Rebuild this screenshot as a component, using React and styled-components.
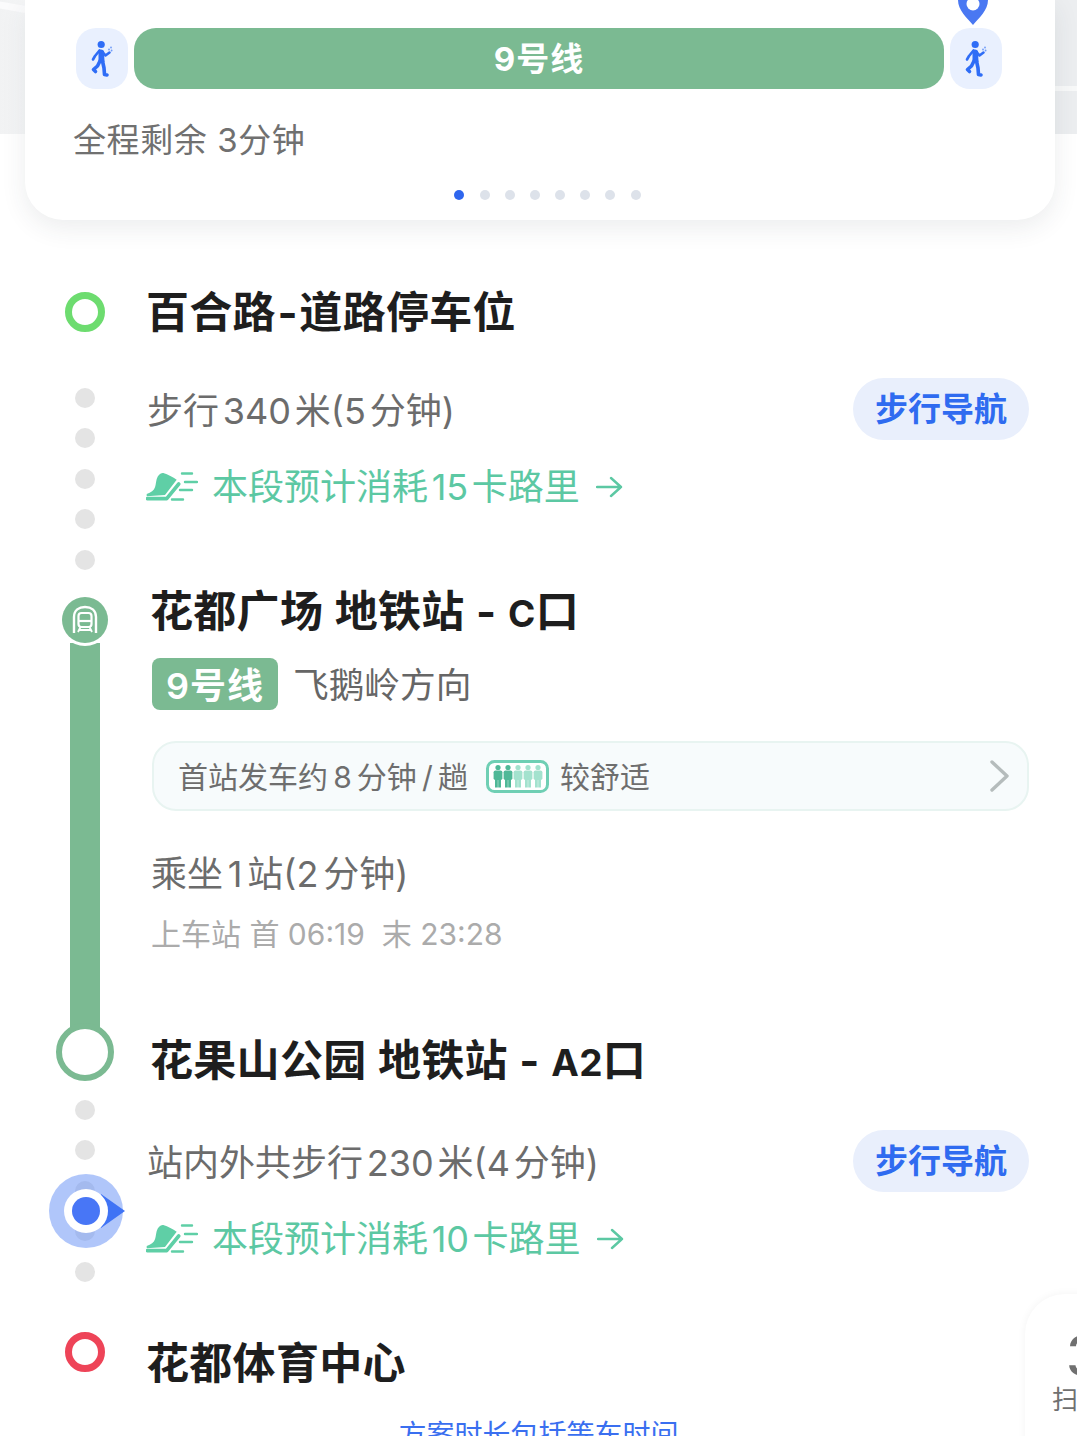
import styled, { createGlobalStyle } from "styled-components";

const GlobalStyle = createGlobalStyle`
	html, body {
		margin: 0;
		padding: 0;
		background: #fff;
		overflow: hidden;
	}
	* {
		box-sizing: border-box;
	}
`;

const Page = styled.div`
	position: relative;
	width: 1077px;
	height: 1436px;
	overflow: hidden;
	background: #fff;
	font-family: Inter, "Noto Sans CJK SC", sans-serif;
	color: #666;
`;

const MapBackdrop = styled.div`
	position: absolute;
	left: 0;
	top: 0;
	width: 100%;
	height: 134px;
	background: linear-gradient(90deg, #f1f2f3 0, #f5f6f7 24px, #eceef0 1056px);
`;

const RoadLeft = styled.div`
	position: absolute;
	left: -10px;
	top: 5px;
	width: 60px;
	height: 7px;
	background: #fbfbfc;
	transform: rotate(10deg);
`;

const RoadRight = styled.div`
	position: absolute;
	right: 0;
	top: 86px;
	width: 24px;
	height: 5px;
	background: #f8f9f9;
`;

const Card = styled.section`
	position: relative;
	width: 1030px;
	height: 220px;
	margin-left: 25px;
	padding: 28px 53px 0 51px;
	background: #fff;
	border-radius: 0 0 38px 38px;
	box-shadow: 0 8px 26px rgba(40, 50, 70, 0.09);
`;

const RouteRow = styled.div`
	display: flex;
	gap: 6px;
	height: 61px;
`;

const WalkTile = styled.div`
	position: relative;
	flex: 0 0 52px;
	display: flex;
	align-items: center;
	justify-content: center;
	background: #e9f0fe;
	border-radius: 20px;
`;

const PinMark = styled.svg`
	position: absolute;
	left: 7px;
	top: -28px;
	width: 32px;
	height: 26px;
`;

const LineBar = styled.div`
	flex: 1;
	display: flex;
	align-items: center;
	justify-content: center;
	padding-bottom: 3px;
	background: #7bba92;
	border-radius: 22px;
	color: #fff;
	font-size: 33px;
	font-weight: 700;
	letter-spacing: 1px;
`;

const Remaining = styled.div`
	margin: 28px 0 0 -3px;
	height: 46px;
	line-height: 46px;
	font-size: 33px;
	color: #707070;
	letter-spacing: 0.6px;
	white-space: nowrap;
`;

const Pager = styled.div`
	display: flex;
	justify-content: center;
	gap: 15.2px;
	margin: 27px 0 0 17px;
`;

const PagerDot = styled.span`
	width: 10px;
	height: 10px;
	border-radius: 50%;
	background: ${(props) => (props.$active ? "#2f66ee" : "#dde2ea")};
`;

const Timeline = styled.div`
	padding: 62px 48px 0 55px;
`;

const Segment = styled.div`
	display: grid;
	grid-template-columns: 60px 1fr;
	column-gap: 33px;
	height: ${(props) => props.$height}px;
`;

const Rail = styled.div`
	position: relative;
	display: flex;
	flex-direction: column;
	align-items: center;
	gap: 20.4px;
	padding-top: ${(props) => props.$top || 0}px;
`;

const WalkDot = styled.span`
	flex: none;
	width: 20px;
	height: 20px;
	border-radius: 50%;
	background: #e4e4e4;
`;

const Ring = styled.span`
	position: relative;
	z-index: 2;
	flex: none;
	width: ${(props) => props.$size}px;
	height: ${(props) => props.$size}px;
	border: ${(props) => props.$border}px solid ${(props) => props.$color};
	border-radius: 50%;
	background: #fff;
`;

const StopTitle = styled.h2`
	margin: ${(props) => props.$top || 0}px 0 0 -2px;
	height: 46px;
	line-height: 46px;
	font-size: 43px;
	font-weight: 700;
	letter-spacing: 0.3px;
	word-spacing: 1px;
	color: #1e1e1e;
	white-space: nowrap;
`;

const Hyphen = styled.span`
	margin: 0 1.5px;
`;

const Gate = styled.span`
	font-size: 37px;
`;

const WalkRow = styled.div`
	display: flex;
	align-items: center;
	justify-content: space-between;
	height: 62px;
	margin-top: ${(props) => props.$top}px;
`;

const WalkText = styled.div`
	margin: 0 0 2px -1px;
	font-size: 36px;
	color: #6c6c6c;
	word-spacing: -6.3px;
	white-space: nowrap;
`;

const NavButton = styled.button`
	width: 176px;
	height: 62px;
	padding: 0 0 4px;
	border: 0;
	border-radius: 31px;
	background: #e9effc;
	color: #2f6bf0;
	font-family: inherit;
	font-size: 33px;
	font-weight: 600;
`;

const CalorieRow = styled.div`
	display: flex;
	align-items: center;
	height: 46px;
	margin-top: 24px;
	font-size: 36px;
	line-height: 40px;
	color: #5cc8a3;
	word-spacing: -6.5px;
	white-space: nowrap;
`;

const CalorieText = styled.span`
	margin-top: -1px;
`;

const ShoeIcon = styled.svg`
	flex: none;
	width: 52px;
	height: 32px;
	margin: 0 14px 0 -2px;
`;

const ArrowIcon = styled.svg`
	flex: none;
	width: 28px;
	height: 24px;
	margin-left: 16px;
`;

const MetroMarker = styled.span`
	position: relative;
	z-index: 1;
	flex: none;
	display: flex;
	align-items: center;
	justify-content: center;
	width: 46px;
	height: 46px;
	border-radius: 50%;
	background: #7bba92;
	box-shadow: 0 0 0 3px #fff;
`;

const MetroLine = styled.span`
	flex: 1;
	width: 30px;
	margin: -20px 0 -8px;
	background: #7bba92;
`;

const MetroBody = styled.div`
	padding-left: 4px;
	margin-top: -2px;
`;

const LineRow = styled.div`
	display: flex;
	align-items: center;
	gap: 15px;
	margin-top: 24px;
`;

const LineBadge = styled.span`
	display: flex;
	align-items: center;
	justify-content: center;
	width: 126px;
	height: 52px;
	padding-bottom: 3px;
	border-radius: 8px;
	background: #7bba92;
	color: #fff;
	font-size: 36px;
	font-weight: 600;
	letter-spacing: 1px;
`;

const Direction = styled.span`
	margin-top: -4px;
	font-size: 35.7px;
	color: #666;
`;

const InfoBox = styled.div`
	display: flex;
	align-items: center;
	height: 70px;
	margin-top: 31px;
	padding: 0 16px 2px 24px;
	border: 2px solid #e8f4f1;
	border-radius: 24px;
	background: #f7fbfc;
	font-size: 30px;
	color: #6e6e6e;
	word-spacing: -3.3px;
	white-space: nowrap;
`;

const CrowdIcon = styled.svg`
	flex: none;
	width: 63px;
	height: 33px;
	margin: 2px 11px 0 18px;
`;

const Chevron = styled.svg`
	flex: none;
	width: 22px;
	height: 34px;
	margin: 2px 0 0 auto;
`;

const RideText = styled.div`
	margin: 40px 0 0 -1px;
	height: 46px;
	line-height: 46px;
	font-size: 36px;
	color: #6c6c6c;
	word-spacing: -5.3px;
	white-space: nowrap;
`;

const BoardText = styled.div`
	margin: 17px 0 0 -1px;
	height: 40px;
	line-height: 40px;
	font-size: 30px;
	color: #ababab;
	white-space: nowrap;
`;

const LocationHalo = styled.div`
	position: absolute;
	z-index: 3;
	left: -6px;
	top: 93px;
	width: 74px;
	height: 74px;
`;

const Note = styled.div`
	position: absolute;
	left: 0;
	right: 0;
	top: 1415px;
	text-align: center;
	font-size: 28px;
	line-height: 40px;
	color: #3a6ff0;
`;

const SideCard = styled.div`
	position: absolute;
	left: 1025px;
	top: 1294px;
	width: 80px;
	height: 160px;
	padding-top: 34px;
	border-radius: 40px 0 0 0;
	background: #fff;
	box-shadow: 0 0 8px rgba(0, 0, 0, 0.05);
	overflow: hidden;
	white-space: nowrap;
	color: #707070;
`;

const SideCount = styled.div`
	margin-left: 41px;
	font-size: 56px;
	line-height: 56px;
	font-weight: 500;
`;

const SideLabel = styled.div`
	margin: 0 0 0 27px;
	font-size: 26px;
	line-height: 32px;
`;

const Walker = () => (
	<svg width="26" height="38" viewBox="90 40 26 38" fill="none" stroke="#2f6df6" strokeLinecap="round" strokeLinejoin="round">
		<circle cx="102.2" cy="44.5" r="3.6" fill="#2f6df6" stroke="none" />
		<path d="M100.5 50.5 L96 56 L94 59.5" strokeWidth="2.6" />
		<path d="M99.5 50 Q103.5 48.5 105 51 L105.5 62 L99.5 62 Z" fill="#2f6df6" stroke="none" />
		<path d="M104 52.5 L106.5 55.5 L110.5 52.5" strokeWidth="2.6" />
		<path d="M101 61 L98.5 66 L94.5 69.5 L96.5 71.5" strokeWidth="3.6" />
		<path d="M103.5 61 L105 68 L105.5 74.5 L108 75" strokeWidth="3.6" />
		<circle cx="112" cy="47.5" r="0.9" fill="#6f9bf8" stroke="none" />
		<circle cx="110" cy="49.5" r="0.9" fill="#6f9bf8" stroke="none" />
		<circle cx="112.6" cy="50.5" r="0.9" fill="#6f9bf8" stroke="none" />
	</svg>
);

const Shoe = () => (
	<ShoeIcon viewBox="0 0 52 32">
		<path d="M0.7 23 C5 21.5 8 19.5 9 16.3 C10 13 10 10.5 10.7 8 C12 4 14.5 1.5 17.3 2 C22 3.5 27 6 30.7 8.7 L19 24 L0.7 25.3 Z" fill="#5fcfa6" />
		<path d="M1.3 27.6 L20.7 27.6 L32.7 13" fill="none" stroke="#5fcfa6" strokeWidth="3.6" strokeLinecap="round" strokeLinejoin="round" />
		<path d="M36 2.5 L46 2.5 M39 11 L51 11 M34 19 L46 19 M26 28.5 L37 28.5" fill="none" stroke="#5fcfa6" strokeWidth="2.4" strokeLinecap="round" />
	</ShoeIcon>
);

const Arrow = () => (
	<ArrowIcon viewBox="0 0 28 24">
		<path d="M1 12 H25 M15 3 L25 12 L15 21" fill="none" stroke="#5cc8a3" strokeWidth="2.4" strokeLinecap="round" strokeLinejoin="round" />
	</ArrowIcon>
);

const Metro = () => (
	<svg width="26" height="30" viewBox="0 0 26 30" fill="none" stroke="#fff">
		<path d="M2 28 V12 C2 5 7 2 13 2 C19 2 24 5 24 12 V28" strokeWidth="2.4" />
		<rect x="6.5" y="8" width="13" height="14" rx="3" strokeWidth="2.2" />
		<path d="M6.5 16 H19.5" strokeWidth="2.2" />
		<path d="M8.5 22 L6 27 M17.5 22 L20 27 M7 25 H19" strokeWidth="1.8" />
	</svg>
);

const Person = ({ x, color }) => (
	<g fill={color}>
		<circle cx={x} cy="7.5" r="2.6" />
		<rect x={x - 4.4} y="10.5" width="8.8" height="9.5" rx="1.8" />
		<rect x={x - 3} y="18" width="2.8" height="9.5" />
		<rect x={x + 0.2} y="18" width="2.8" height="9.5" />
	</g>
);

const Crowd = () => (
	<CrowdIcon viewBox="0 0 63 33">
		<rect x="1.5" y="1.5" width="60" height="30" rx="7" fill="#fff" stroke="#6fcfb4" strokeWidth="3" />
		<Person x={12} color="#4fb897" />
		<Person x={22} color="#4fb897" />
		<Person x={32} color="#a3e2ce" />
		<Person x={42} color="#a3e2ce" />
		<Person x={52} color="#a3e2ce" />
	</CrowdIcon>
);

const Dots = ({ count }) =>
	Array.from({ length: count }, (_, i) => <WalkDot key={i} />);

const App = () => {
	return (
		<Page>
			<GlobalStyle />
			<MapBackdrop>
				<RoadLeft />
				<RoadRight />
			</MapBackdrop>
			<Card>
				<RouteRow>
					<WalkTile>
						<Walker />
					</WalkTile>
					<LineBar>9号线</LineBar>
					<WalkTile>
						<PinMark viewBox="0 0 32 26">
							<path d="M1 0 H31 C31 10 22 18 16 25 C10 18 1 10 1 0 Z" fill="#4a78f2" />
							<circle cx="16" cy="4" r="6.5" fill="#fff" />
						</PinMark>
						<Walker />
					</WalkTile>
				</RouteRow>
				<Remaining>全程剩余 3分钟</Remaining>
				<Pager>
					{Array.from({ length: 8 }, (_, i) => (
						<PagerDot key={i} $active={i === 0} />
					))}
				</Pager>
			</Card>

			<Timeline>
				<Segment $height={60}>
					<Rail $top={10}>
						<Ring $size={40} $border={7} $color="#6ddc6f" />
					</Rail>
					<StopTitle $top={7}>
						百合路<Hyphen>-</Hyphen>道路停车位
					</StopTitle>
				</Segment>

				<Segment $height={248}>
					<Rail $top={46}>
						<Dots count={5} />
					</Rail>
					<div>
						<WalkRow $top={36}>
							<WalkText>步行 340 米(5 分钟)</WalkText>
							<NavButton>步行导航</NavButton>
						</WalkRow>
						<CalorieRow>
							<Shoe />
							<CalorieText>本段预计消耗 15 卡路里</CalorieText>
							<Arrow />
						</CalorieRow>
					</div>
				</Segment>

				<Segment $height={433}>
					<Rail $top={7}>
						<MetroMarker>
							<Metro />
						</MetroMarker>
						<MetroLine />
					</Rail>
					<MetroBody>
						<StopTitle>
							花都广场 地铁站 - <Gate>C</Gate>口
						</StopTitle>
						<LineRow>
							<LineBadge>9号线</LineBadge>
							<Direction>飞鹅岭方向</Direction>
						</LineRow>
						<InfoBox>
							首站发车约 8 分钟 / 趟
							<Crowd />
							较舒适
							<Chevron viewBox="0 0 22 34">
								<path d="M3 3 L18 17 L3 31" fill="none" stroke="#b5bcbc" strokeWidth="3.4" strokeLinecap="round" strokeLinejoin="round" />
							</Chevron>
						</InfoBox>
						<RideText>乘坐 1 站(2 分钟)</RideText>
						<BoardText>上车站 首 06:19 &nbsp;末 23:28</BoardText>
					</MetroBody>
				</Segment>

				<Segment $height={58}>
					<Rail>
						<Ring $size={58} $border={6} $color="#7bba92" />
					</Rail>
					<MetroBody>
						<StopTitle $top={16}>
							花果山公园 地铁站 - <Gate>A2</Gate>口
						</StopTitle>
					</MetroBody>
				</Segment>

				<Segment $height={251}>
					<Rail $top={19}>
						<Dots count={5} />
						<LocationHalo>
							<svg width="80" height="74" viewBox="0 0 80 74">
								<circle cx="37" cy="37" r="37" fill="#6f97f6" fillOpacity="0.55" />
								<path d="M52 20 L76 37 L52 54 Z" fill="#3f73f5" />
								<circle cx="37" cy="37" r="22" fill="#fff" />
								<circle cx="37" cy="37" r="14" fill="#4876f6" />
							</svg>
						</LocationHalo>
					</Rail>
					<div>
						<WalkRow $top={49}>
							<WalkText>站内外共步行 230 米(4 分钟)</WalkText>
							<NavButton>步行导航</NavButton>
						</WalkRow>
						<CalorieRow>
							<Shoe />
							<CalorieText>本段预计消耗 10 卡路里</CalorieText>
							<Arrow />
						</CalorieRow>
					</div>
				</Segment>

				<Segment $height={60}>
					<Rail>
						<Ring $size={40} $border={7} $color="#ee4458" />
					</Rail>
					<StopTitle $top={8}>花都体育中心</StopTitle>
				</Segment>
			</Timeline>

			<Note>方案时长包括等车时间</Note>
			<SideCard>
				<SideCount>3</SideCount>
				<SideLabel>扫码</SideLabel>
			</SideCard>
		</Page>
	);
};

export default App;
